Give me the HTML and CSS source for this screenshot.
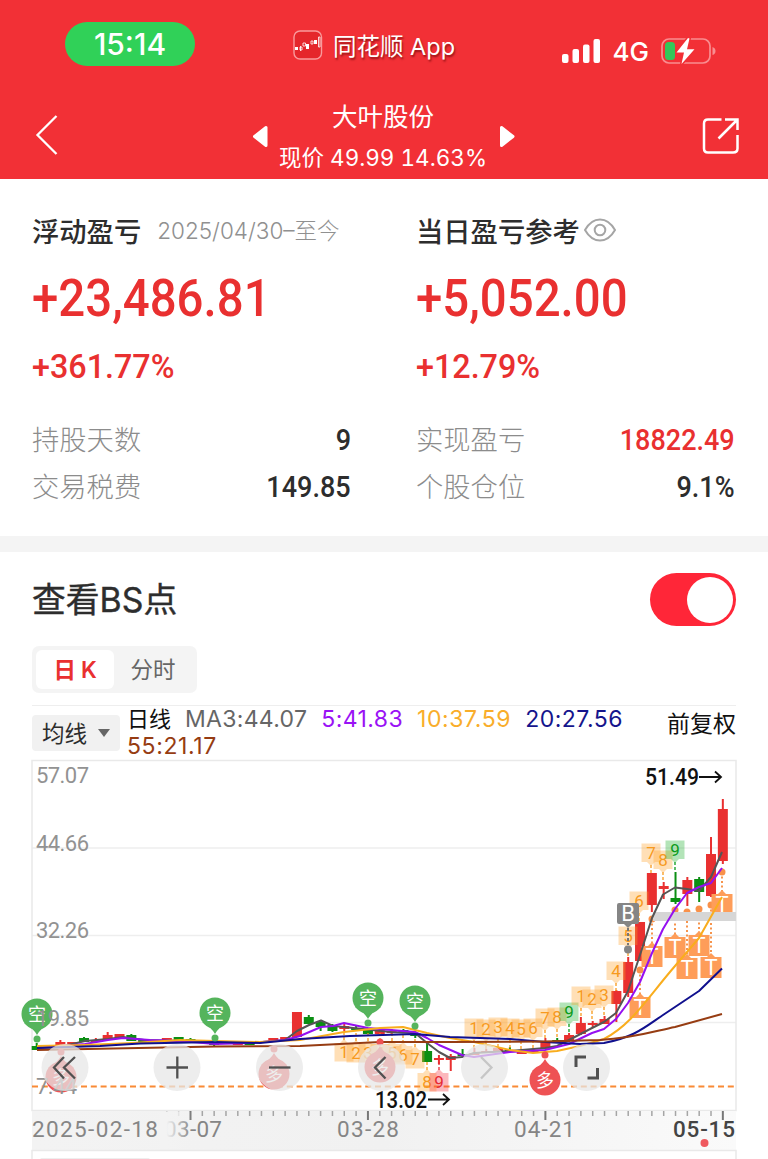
FILE: index.html
```html
<!DOCTYPE html>
<html lang="zh-CN">
<head>
    <meta charset="UTF-8">
    <meta name="viewport" content="width=device-width, initial-scale=1.0">
    <title>大叶股份</title>
    <link rel="stylesheet" href="styles.css">
</head>
<body>
    <header class="header">
        <div class="status-bar">
            <span class="time">15:14</span>
            <div class="app-name">
                <svg width="30" height="30" viewBox="0 0 30 30">
                    <rect x="1" y="1" width="27.5" height="28" rx="6" fill="#e5262b" stroke="#f99a9c" stroke-width="1.4"/>
                    <path d="M2 17h3v3H2zM13 14h3v5h-3zM21 10h3v4h-3z" fill="#fff"/>
                    <path d="M7.500 16v5M7 17h2v3H7zM10 13h2.500v3H10zM18 11h2v3h-2zM25.500 7h1.500v10h-1.500z" fill="none" stroke="#fff" stroke-width=".8"/>
                </svg>
                <span>同花顺 App</span>
            </div>
            <div class="signal">
                <svg width="39" height="25" viewBox="0 0 39 25" fill="#fff">
                    <rect x="0" y="15" width="6.500" height="9" rx="2"/>
                    <rect x="10.500" y="10" width="6.500" height="14" rx="2"/>
                    <rect x="21" y="5.500" width="6.500" height="18.500" rx="2"/>
                    <rect x="31.500" y="0" width="6.500" height="24" rx="2"/>
                </svg>
                <span>4G</span>
                <svg width="55" height="28" viewBox="0 0 55 28">
                    <rect x="1" y="2" width="48" height="24" rx="7" fill="none" stroke="#f98d90" stroke-width="1.700"/>
                    <path d="M51.500 10q3 1 3 4t-3 4z" fill="#f98d90"/>
                    <rect x="4" y="5" width="10" height="18" rx="3.500" fill="#34c759"/>
                    <path d="M27 1L15.500 15.500H23L20.500 27L33.500 12.200H26L28.500 1.500z" fill="#fff" stroke="#f23036" stroke-width="3" paint-order="stroke" stroke-linejoin="round"/>
                </svg>
            </div>
        </div>
        <div class="nav-bar">
            <svg class="back" width="24" height="42" viewBox="0 0 24 42"><path d="M21.500 2L2.500 21L21.500 40" fill="none" stroke="#fff" stroke-width="2.300"/></svg>
            <svg class="prev" width="17" height="23" viewBox="0 0 17 23"><path d="M15 2.500V20.500L3.500 11.500z" fill="#fff" stroke="#fff" stroke-width="3" stroke-linejoin="round"/></svg>
            <div class="stock">
                <h1>大叶股份</h1>
                <p>现价 49.99 14.63%</p>
            </div>
            <svg class="next" width="17" height="23" viewBox="0 0 17 23"><path d="M2.500 2.500V20.500L14 11.500z" fill="#fff" stroke="#fff" stroke-width="3" stroke-linejoin="round"/></svg>
            <svg class="share" width="38" height="38" viewBox="0 0 38 38" fill="none" stroke="#fff" stroke-width="2.500">
                <path d="M19.500 2.500H6Q2 2.500 2 6.500V31.500Q2 35.500 6 35.500H31Q35.500 35.500 35.500 31.500V18M23 2.500H35.500V13M35 3L16.500 21.500"/>
            </svg>
        </div>
    </header>

    <section class="summary">
        <div class="column">
            <h2>浮动盈亏 <span class="range">2025/04/30–至今</span></h2>
            <p class="amount">+23,486.81</p>
            <p class="percent">+361.77%</p>
            <div class="row"><span>持股天数</span><b>9</b></div>
            <div class="row"><span>交易税费</span><b>149.85</b></div>
        </div>
        <div class="column">
            <h2>当日盈亏参考
                <svg width="34" height="26" viewBox="0 0 34 26" fill="none" stroke="#a5a5a5" stroke-width="2">
                    <path d="M2 13Q8 2.500 17 2.500T32 13Q26 23.500 17 23.500T2 13z"/>
                    <circle cx="17" cy="13" r="5.300"/>
                </svg>
            </h2>
            <p class="amount">+5,052.00</p>
            <p class="percent">+12.79%</p>
            <div class="row"><span>实现盈亏</span><b class="red">18822.49</b></div>
            <div class="row"><span>个股仓位</span><b>9.1%</b></div>
        </div>
    </section>

    <section class="bs-section">
        <div class="bs-title">
            <h2>查看BS点</h2>
            <div class="switch"></div>
        </div>
        <div class="tabs">
            <span class="tab active">日 K</span>
            <span class="tab">分时</span>
        </div>
        <div class="indicator">
            <div class="select">均线 <i></i></div>
            <div class="ma">
                <span class="day">日线</span><span class="ma3">MA3:44.07</span><span class="ma5">5:41.83</span><span class="ma10">10:37.59</span><span class="ma20">20:27.56</span>
                <span class="ma55">55:21.17</span>
            </div>
            <span class="adjust">前复权</span>
        </div>
    </section>

    <svg class="chart" width="768" height="403" viewBox="0 756 768 403">
        <defs>
            <linearGradient id="axisBg">
                <stop offset="0" stop-color="#f3f3f3"/>
                <stop offset=".5" stop-color="#f1f1f1"/>
                <stop offset="1" stop-color="#fafafa"/>
            </linearGradient>
            <linearGradient id="fade">
                <stop offset="0" stop-color="#f3f3f3"/>
                <stop offset=".2" stop-color="#f3f3f3"/>
                <stop offset="1" stop-color="#f3f3f3" stop-opacity="0"/>
            </linearGradient>
        </defs>

        <!-- frame and grid -->
        <path d="M32 848H736M32 935.500H736M32 1022.500H736" stroke="#eee" stroke-width="1.500"/>
        <rect x="32" y="760.500" width="704" height="350" fill="none" stroke="#e9e9e9" stroke-width="1.500"/>
        <path d="M32 1086.500H736" stroke="#f98a35" stroke-width="2" stroke-dasharray="6 3.800"/>

        <g id="candles"></g>
        <g id="badges"></g>
        <g id="trades"></g>
        <rect x="653" y="912" width="83" height="9" fill="#d6d6d6"/>

        <!-- moving averages -->
        <g fill="none" stroke-width="2" stroke-linejoin="round">
            <path stroke="#555" d="M37 1048L60 1047L85 1041L108 1039L123 1037L144 1040L180 1041L215 1043L250 1043L285 1040L297 1031L309 1025L321 1020.500L333 1026L344 1027L391 1032L415 1033L427 1043L439 1052L450 1058L462 1057L474 1053L510 1051L545 1048L557 1046L569 1040L592 1028L604 1022L616 1013L628 991L640 955L652 918L663 894.500L675 887.500L687 889L699 891L711 877L722 852"/>
            <path stroke="#9510f0" d="M37 1048L85 1044L108 1040L123 1038L150 1040L180 1041L215 1044L250 1043L285 1040L300 1036L321 1027L333 1026L344 1023L368 1028L391 1030L415 1032L427 1038L439 1045L462 1055L474 1057L510 1052L545 1050L569 1044L592 1033L604 1029L616 1019L628 1003L640 982L652 953L663 929L675 909L687 893L699 887L711 883L722 868"/>
            <path stroke="#f9ad1d" d="M37 1046L85 1045L132 1043L180 1040L215 1041L260 1042L300 1040L344 1032L380 1028L403 1027L427 1033L450 1038L474 1042L510 1050L533 1053L557 1051L580 1046L604 1039C632 1024 645 1001 675 966L699 938L722 897"/>
            <path stroke="#10108e" d="M37 1048L100 1046L140 1043.500L215 1042L260 1043L300 1039L350 1036L415 1034L450 1037L510 1039L545 1042L580 1044L604 1043C635 1037 645 1027 663 1015L699 991L722 968.500"/>
            <path stroke="#963c12" d="M37 1050L215 1046.500L300 1046L380 1042L450 1042L545 1041.500L600 1040C635 1038 655 1031 675 1027L722 1014"/>
        </g>

        <!-- cost point -->
        <path d="M628 923V945" stroke="#777" stroke-width="2" stroke-dasharray="3 2"/>
        <circle cx="628" cy="949.500" r="4" fill="#858585"/>
        <path d="M619 903h18q2 0 2 2v17q0 2-2 2h-5l-4 4l-4-4h-5q-2 0-2-2v-17q0-2 2-2z" fill="#858585"/>
        <text x="628" y="921" class="letter">B</text>

        <g id="pins"></g>

        <!-- price labels -->
        <g class="price">
            <text x="36" y="783" textLength="53">57.07</text>
            <text x="36" y="851" textLength="53">44.66</text>
            <text x="36" y="938" textLength="53">32.26</text>
            <text x="36" y="1026" textLength="53">19.85</text>
            <text x="36" y="1094" textLength="41">7.44</text>
        </g>
        <g class="extreme">
            <text x="645" y="785" textLength="54" lengthAdjust="spacingAndGlyphs">51.49</text>
            <text x="375" y="1108" textLength="52" lengthAdjust="spacingAndGlyphs">13.02</text>
        </g>
        <path d="M699 777H721M715 771.500L721 777L715 782.500M428 1099.500H449M443 1094L449 1099.500L443 1105" fill="none" stroke="#111" stroke-width="1.800"/>

        <!-- tool buttons -->
        <g fill="#e7e7e7" fill-opacity=".74">
            <circle cx="65" cy="1067.500" r="23.500"/>
            <circle cx="177" cy="1067.500" r="23.500"/>
            <circle cx="279.500" cy="1067.500" r="23.500"/>
            <circle cx="381.500" cy="1067.500" r="23.500"/>
            <circle cx="484.500" cy="1067.500" r="23.500"/>
            <circle cx="586.500" cy="1067.500" r="23.500"/>
        </g>
        <g fill="none" stroke="#505050" stroke-width="2.300">
            <path d="M64 1057L54 1067.500L64 1078.500M75 1057L64 1067.500L75 1078.500"/>
            <path d="M166.500 1067.500H188M177.300 1056.500V1078.500"/>
            <path d="M269 1067.500H290.500"/>
            <path d="M385.500 1057L375 1067.500L385.500 1078.500"/>
            <path d="M481 1057L491.500 1067.500L481 1078.500" stroke="#c6c6c6"/>
            <path d="M576 1067V1057H586M597.500 1068V1078H587.500" stroke-width="3"/>
        </g>

        <!-- date axis -->
        <rect x="32" y="1111" width="704" height="39" fill="url(#axisBg)"/>
        <g id="ticks" stroke="#a5a5a5" stroke-width="1.500"></g>
        <g class="dates">
            <text x="164" y="1137" textLength="58">03-07</text>
            <rect x="160" y="1112" width="32" height="37" fill="url(#fade)"/>
            <text x="32" y="1137" textLength="126">2025-02-18</text>
            <text x="337" y="1137" textLength="62">03-28</text>
            <text x="514" y="1137" textLength="61">04-21</text>
            <text x="673" y="1137" textLength="62" class="last">05-15</text>
        </g>
        <circle cx="704.500" cy="1143" r="4" fill="#ef5a5f"/>
        <path d="M32 1159V1150.500H736V1159" fill="none" stroke="#e9e9e9" stroke-width="1.500"/>
        <rect x="40" y="1158" width="110" height="5" rx="2" fill="#eee"/>
    </svg>

    <script>
        const NS = 'http://www.w3.org/2000/svg';
        const STEP = 11.83;
        const START = 36.7;

        function add(parent, tag, attrs, text) {
            const el = document.createElementNS(NS, tag);
            for (const key in attrs) el.setAttribute(key, attrs[key]);
            if (text) el.textContent = text;
            parent.appendChild(el);
            return el;
        }

        // index, high, body top, body bottom, low, r = up / g = down
        const candles = [
            [0, 1043, 1046, 1050, 1050, 'g'], [2, 1040, 1042, 1045, 1045, 'r'], [3, 1042, 1042, 1044, 1044, 'r'],
            [4, 1037, 1038, 1042, 1042, 'g'], [5, 1038, 1040, 1042, 1042, 'r'], [6, 1032, 1035, 1039, 1039, 'r'],
            [7, 1034, 1034, 1038, 1038, 'r'], [8, 1034, 1035, 1041, 1041, 'g'], [9, 1039, 1040, 1042, 1042, 'g'],
            [11, 1038, 1038, 1041, 1041, 'r'], [12, 1037, 1037, 1040, 1040, 'g'], [13, 1038, 1039, 1041, 1041, 'g'],
            [15, 1040, 1042, 1045, 1046, 'g'], [17, 1042, 1043, 1045, 1045, 'r'], [18, 1042, 1043, 1045, 1045, 'g'],
            [20, 1038, 1038, 1041, 1041, 'r'], [21, 1037, 1037, 1041, 1041, 'r'], [22, 1012, 1012, 1037, 1037, 'r'],
            [23, 1015, 1017, 1024, 1024, 'g'], [24, 1020, 1022, 1027, 1031, 'g'], [25, 1024, 1025, 1031, 1032, 'g'],
            [26, 1023, 1026, 1029, 1031, 'r'], [27, 1026, 1028, 1030, 1031, 'g'], [28, 1028, 1030, 1034, 1034, 'g'],
            [29, 1028, 1030, 1034, 1034, 'r'], [30, 1029, 1031, 1033, 1034, 'r'], [31, 1029, 1030, 1033, 1033, 'g'],
            [32, 1031, 1033, 1036, 1038, 'g'], [33, 1043, 1051, 1062, 1062, 'g'], [34, 1055, 1058, 1060, 1064, 'r'],
            [35, 1054, 1056, 1060, 1071, 'r'], [36, 1049, 1054, 1056, 1057, 'g'], [37, 1048, 1053, 1055, 1055, 'r'],
            [38, 1049, 1051, 1053, 1053, 'r'], [39, 1047, 1048, 1051, 1051, 'r'], [40, 1047, 1050, 1052, 1052, 'g'],
            [41, 1051, 1051, 1054, 1054, 'r'], [42, 1048, 1050, 1053, 1053, 'r'], [43, 1038, 1041, 1049, 1049, 'r'],
            [44, 1038, 1040, 1043, 1043, 'g'], [45, 1033, 1035, 1041, 1042, 'r'], [46, 1017, 1023, 1034, 1035, 'r'],
            [47, 1021, 1023, 1025, 1027, 'r'], [48, 1016, 1019, 1024, 1024, 'r'], [49, 990, 991, 1004, 1022, 'r'],
            [50, 957, 962, 993, 997, 'r'], [51, 922, 922, 961, 961, 'r'], [52, 873, 873, 905, 912, 'r'],
            [53, 882, 886, 889, 899, 'r'], [54, 872, 898, 902, 904, 'g'], [55, 877, 880, 894, 906, 'r'],
            [56, 877, 879, 892, 902, 'g'], [57, 837, 854, 896, 897, 'r'], [58, 799, 809, 861, 864, 'r']
        ];
        const candleLayer = document.getElementById('candles');
        candles.forEach(([i, high, top, bottom, low, dir]) => {
            const x = START + i * STEP;
            const fill = dir === 'r' ? '#e93030' : '#0b8f13';
            add(candleLayer, 'rect', { x: x - 1, y: high, width: 2, height: low - high, fill });
            add(candleLayer, 'rect', { x: x - 5, y: top, width: 10, height: bottom - top, fill });
        });

        // sequence numbers: x, y, digit, side of the pointer, colour
        const badges = [
            [344, 1052, '1', 'up'], [356, 1053, '2', 'up'], [368, 1053, '3', 'up'], [380, 1053, '4', 'up'],
            [392, 1053, '5', 'up'], [403, 1055, '6', 'up'], [415, 1059, '7', 'up'], [427, 1082, '8', 'up'],
            [439, 1082, '9', 'up', 'red'],
            [474, 1028, '1'], [486, 1029, '2'], [498, 1027, '3'], [510, 1028, '4'], [521, 1029, '5'], [533, 1028, '6'],
            [545, 1018, '7'], [557, 1017, '8'], [569, 1012, '9', 'down', 'green'],
            [581, 996, '1'], [592, 999, '2'], [604, 995, '3'], [616, 971, '4'], [628, 936, '5'], [639, 901, '6'],
            [651, 853, '7'], [663, 860, '8'], [675, 850, '9', 'down', 'green']
        ];
        const shades = {
            orange: ['#ffa02a', '#f79a1e'],
            green: ['#1fb02f', '#0d9b1b'],
            red: ['#f5303a', '#e62a34']
        };
        const badgeLayer = document.getElementById('badges');
        badges.forEach(([x, y, digit, side = 'down', tone = 'orange']) => {
            const s = side === 'down' ? 1 : -1;
            const [bg, fg] = shades[tone];
            add(badgeLayer, 'path', { d: `M${x} ${y + s * 12}V${y + s * 22}`, stroke: fg, 'stroke-width': 1.3, 'stroke-dasharray': '3 2' });
            add(badgeLayer, 'path', {
                d: `M${x - 9.5} ${y - s * 9.5}H${x + 9.5}V${y + s * 9}H${x + 4}L${x} ${y + s * 13}L${x - 4} ${y + s * 9}H${x - 9.5}z`,
                fill: bg, 'fill-opacity': .34
            });
            add(badgeLayer, 'text', { x, y: y + 6, fill: fg, class: 'digit' }, digit);
        });

        // trade marks: x, y of the badge and y of its dot
        const trades = [[640, 1007, 970], [652, 956, 919], [675, 947, 910], [699, 945, 909], [687, 968, 912], [711, 967, 905], [722, 904, 872]];
        const tradeLayer = document.getElementById('trades');
        trades.forEach(([x, y, dot]) => {
            add(tradeLayer, 'path', { d: `M${x} ${dot}V${y - 12}`, stroke: '#f5893a', 'stroke-width': 1.8, 'stroke-dasharray': '2 2.5' });
            add(tradeLayer, 'circle', { cx: x, cy: dot, r: 3.5, fill: '#f9914a' });
            add(tradeLayer, 'path', { d: `M${x - 10.5} ${y - 10}H${x - 4}L${x} ${y - 14}L${x + 4} ${y - 10}H${x + 10.5}V${y + 11}H${x - 10.5}z`, fill: '#fe9d59' });
            add(tradeLayer, 'text', { x, y: y + 7.5, class: 'letter' }, 'T');
        });

        // long / short signals
        const pins = [[37, 1014, '空'], [215, 1013, '空'], [368, 998, '空'], [415, 1001, '空'], [61, 1077, '多'], [274, 1074, '多'], [380, 1067, '多'], [545, 1080, '多']];
        const pinLayer = document.getElementById('pins');
        pins.forEach(([x, y, word]) => {
            const s = word === '空' ? 1 : -1;
            const fill = s > 0 ? '#55b45c' : '#ee5254';
            add(pinLayer, 'circle', { cx: x, cy: y + s * 25, r: 3.5, fill });
            add(pinLayer, 'path', { d: `M${x - 13} ${y + s * 9}Q${x - 3} ${y + s * 15} ${x} ${y + s * 21}Q${x + 3} ${y + s * 15} ${x + 13} ${y + s * 9}z`, fill });
            add(pinLayer, 'circle', { cx: x, cy: y, r: 15.5, fill });
            add(pinLayer, 'text', { x, y: y + 6.5, class: 'pin' }, word);
        });

        const tickLayer = document.getElementById('ticks');
        for (let i = 11; i <= 58; i++) {
            const x = START + i * STEP;
            const major = (i - 13) % 15 === 0;
            const tick = add(tickLayer, 'path', { d: `M${x} 1111V${major ? 1120 : 1116}` });
            if (major) tick.setAttribute('class', 'major');
            if (i < 13) tick.setAttribute('opacity', .4);
        }
    </script>
</body>
</html>
```
FILE: styles.css
```css
* {
    box-sizing: border-box;
}

body {
    margin: 0;
    width: 768px;
    height: 1159px;
    overflow: hidden;
    background-color: #fff;
    color: #2d2d2d;
    font-family: Inter, "Noto Sans CJK SC", sans-serif;
}

h1, h2, p {
    margin: 0;
    font-weight: normal;
}

svg {
    display: block;
    flex: none;
}

.header {
    height: 179px;
    background-color: #f23036;
    color: #fff;
}

.status-bar {
    display: flex;
    height: 88px;
    padding: 22px 52px 0 65px;
}

.time {
    width: 130px;
    height: 44px;
    border-radius: 22px;
    background-color: #30d158;
    font-size: 30px;
    font-weight: 500;
    line-height: 45px;
    text-align: center;
}

.app-name {
    display: flex;
    align-items: center;
    gap: 10px;
    height: 46px;
    margin-left: 98px;
    font-size: 23.5px;
    white-space: nowrap;
    text-shadow: 1px 2px 2px rgba(90, 0, 0, 0.6);
}

.signal {
    display: flex;
    align-items: center;
    gap: 12px;
    height: 58px;
    margin-left: auto;
    font-size: 26px;
    font-weight: 500;
}

.nav-bar {
    display: flex;
    height: 91px;
    padding: 12px 28px 0 35px;
}

.back {
    margin-top: 14px;
}

.prev {
    margin: 25px 0 0 192px;
}

.stock {
    width: 214px;
    margin-left: 8px;
    text-align: center;
    white-space: nowrap;
}

.stock h1 {
    font-size: 25.5px;
    line-height: 34px;
}

.stock p {
    font-size: 22.5px;
    font-variant-numeric: tabular-nums;
    line-height: 48px;
}

.next {
    margin: 25px 0 0 9px;
}

.share {
    margin: 17px 0 0 auto;
}

.summary {
    display: flex;
    gap: 65px;
    height: 357px;
    padding: 31px 33px 0 32px;
}

.column {
    width: 319px;
}

.column h2 {
    display: flex;
    align-items: center;
    height: 40px;
    font-size: 27.3px;
    font-weight: 500;
    white-space: nowrap;
}

.column h2 svg {
    margin-left: 3px;
}

.range {
    margin: -3px 0 0 16px;
    color: #909090;
    font-size: 22.5px;
    font-weight: 300;
}

.amount, .percent {
    color: #e93030;
    font-family: Roboto, sans-serif;
    font-weight: 500;
    transform-origin: left;
}

.amount {
    margin-top: 15px;
    font-size: 51.5px;
    line-height: 68px;
    transform: scaleX(0.92);
}

.percent {
    margin-top: 13px;
    margin-bottom: 28px;
    font-size: 34px;
    line-height: 40px;
    transform: scaleX(0.95);
}

.row {
    display: flex;
    justify-content: space-between;
    align-items: center;
    height: 47px;
    color: #8c8c8c;
    font-size: 27.3px;
    font-weight: 300;
}

.row b {
    margin-top: 3px;
    color: #2d2d2d;
    font-family: Roboto, sans-serif;
    font-size: 30px;
    font-weight: 500;
    transform: scaleX(0.9);
    transform-origin: right;
}

.row b.red {
    color: #e93030;
}

.bs-section {
    height: 220px;
    padding: 21px 32px 0;
    border-top: 16px solid #f4f4f4;
}

.bs-title {
    display: flex;
    justify-content: space-between;
    height: 73px;
}

.bs-title h2 {
    font-size: 33.8px;
    line-height: 54px;
    -webkit-text-stroke: 0.4px #2d2d2d;
}

.switch {
    display: flex;
    justify-content: flex-end;
    width: 86px;
    height: 53px;
    padding: 3.5px;
    border-radius: 27px;
    background-color: #ff2638;
}

.switch::after {
    content: "";
    width: 46px;
    height: 46px;
    border-radius: 50%;
    background-color: #fff;
}

.tabs {
    display: flex;
    width: 165px;
    height: 47px;
    padding: 4px;
    border-radius: 7px;
    background-color: #f4f4f4;
}

.tab {
    width: 78px;
    border-radius: 6px;
    color: #666;
    font-size: 22.5px;
    line-height: 39px;
    text-align: center;
}

.tab.active {
    background-color: #fff;
    color: #e93030;
    font-weight: 600;
    letter-spacing: -0.4px;
}

.indicator {
    display: flex;
    height: 54px;
    margin-top: 12px;
    border-top: 1.5px solid #eee;
}

.select {
    display: flex;
    align-items: center;
    gap: 11px;
    width: 88px;
    height: 36px;
    margin-top: 9px;
    padding: 0 0 3px 10px;
    border-radius: 4px;
    background-color: #f1f1f1;
    font-size: 22.5px;
    white-space: nowrap;
}

.select i {
    margin-top: 3px;
    border: 6px solid transparent;
    border-top: 8px solid #666;
    border-bottom: none;
}

.ma {
    width: 510px;
    margin-left: 7px;
    font-size: 23px;
    line-height: 27px;
    white-space: nowrap;
}

.ma span {
    margin-right: 14px;
}

.day {
    color: #111;
    font-size: 22px;
}

.ma3 {
    color: #666;
    letter-spacing: 0.3px;
}

.ma5 {
    color: #9a12f5;
    letter-spacing: 0.4px;
}

.ma10 {
    color: #f9ad2a;
    letter-spacing: 0.6px;
}

.ma20 {
    color: #15158c;
    letter-spacing: 0.5px;
}

.ma .ma55 {
    display: block;
    color: #963c12;
    letter-spacing: 0.6px;
}

.adjust {
    margin-left: auto;
    color: #111;
    font-size: 23px;
    line-height: 37px;
    white-space: nowrap;
}

.chart text {
    font-family: Roboto, "Noto Sans CJK SC", sans-serif;
}

.price {
    fill: #929292;
    font-size: 22px;
}

.extreme {
    fill: #111;
    font-size: 23px;
    font-weight: 500;
}

.dates {
    fill: #858585;
    font-size: 22.5px;
}

.dates .last {
    fill: #444;
    font-weight: 500;
}

.major {
    stroke: #777;
    stroke-width: 2;
}

.digit {
    font-size: 17px;
    text-anchor: middle;
}

.letter {
    fill: #fff;
    font-size: 22px;
    text-anchor: middle;
}

.pin {
    fill: #fff;
    font-size: 18px;
    text-anchor: middle;
}
```
